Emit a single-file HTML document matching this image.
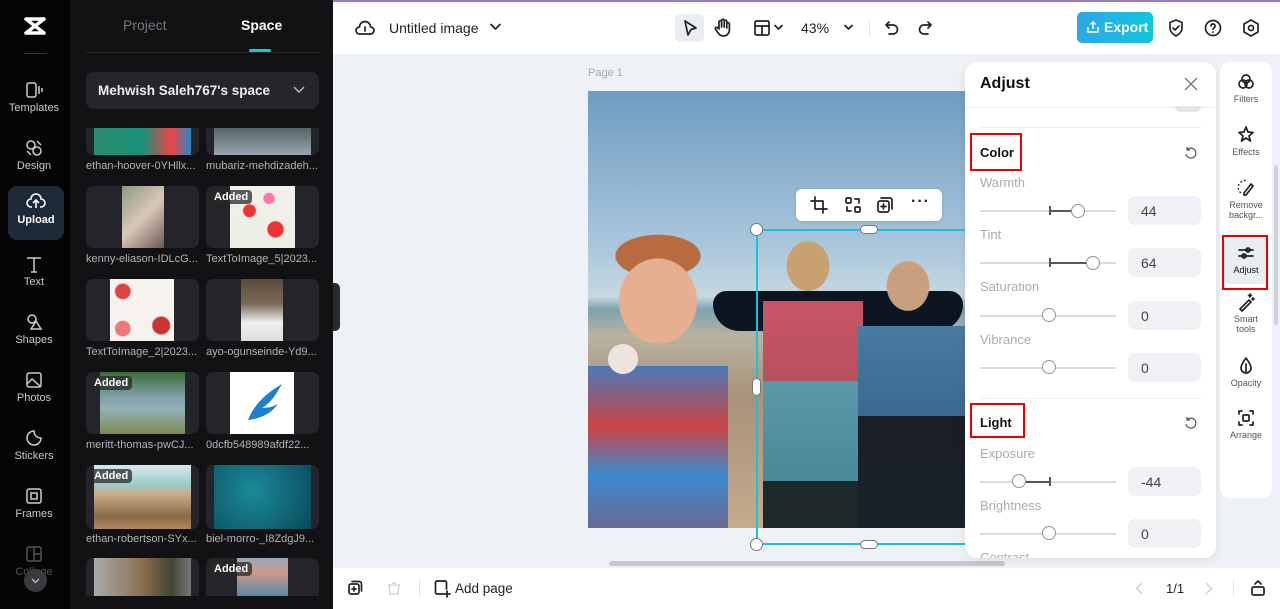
<!DOCTYPE html>
<html><head><meta charset="utf-8"><style>
*{box-sizing:border-box;margin:0;padding:0}
body{width:1280px;height:609px;overflow:hidden;font-family:"Liberation Sans",sans-serif;background:#eef1f5;position:relative}
.abs{position:absolute}
.rail{left:0;top:0;width:70px;height:609px;background:#050506}
.rail .it{position:absolute;left:6px;width:56px;height:54px;color:#c9c9cc;font-size:11px;text-align:center}
.rail .it svg{display:block;margin:6px auto 2px}
.panel{left:70px;top:0;width:263px;height:609px;background:#121215}
.thumb{position:absolute;width:113px;height:80px;background:#24252a;border-radius:7px;overflow:hidden}
.thumb .img{position:absolute;top:0;height:80px}
.cap{position:absolute;color:#b4b4b8;font-size:11px;white-space:nowrap;width:115px;overflow:hidden}
.added{position:absolute;left:4px;top:4px;background:rgba(40,40,40,.75);color:#fff;font-size:11px;font-weight:bold;padding:1px 4px;border-radius:4px}
.top{left:333px;top:0;width:947px;height:54px;background:#fff;border-top:2px solid #9a7ac2}
.bot{left:333px;top:568px;width:947px;height:41px;background:#fff}
.ic{stroke:#222;fill:none;stroke-width:1.7;stroke-linecap:round;stroke-linejoin:round}
.adj{left:965px;top:62px;width:251px;height:496px;background:#fff;border-radius:12px;box-shadow:0 2px 10px rgba(0,0,0,.08);overflow:hidden}
.lbl{position:absolute;left:15px;color:#a8acb3;font-size:13px}
.trk{position:absolute;left:15px;width:136px;height:2px;background:#d8dbe0}
.knob{position:absolute;width:14px;height:14px;border-radius:50%;background:#fff;border:1.5px solid #8e949c}
.val{position:absolute;left:163px;width:73px;height:29px;background:#eff1f4;border-radius:7px;font-size:14px;color:#444;padding:7px 0 0 13px}
.rr{left:1220px;top:62px;width:52px;height:436px;background:#fff;border-radius:10px}
.rr .it{position:absolute;left:2px;width:48px;text-align:center;font-size:9px;color:#555}
.rr svg{display:block;margin:0 auto 2px}
.red{position:absolute;border:2px solid #e00}
</style></head><body>

<div class="abs rail">
  <svg class="abs" style="left:22px;top:16px" width="26" height="20" viewBox="0 0 26 20"><path d="M4 3h18L4 17h18z" stroke="#fff" stroke-width="3.5" fill="none" stroke-linejoin="round"/></svg>
  <div class="abs" style="left:24px;top:53px;width:23px;height:1px;background:#333"></div>
  <div class="it" style="top:74px"><svg width="20" height="20" viewBox="0 0 20 20"><rect x="3" y="3" width="9" height="14" rx="2" stroke="#ccc" fill="none" stroke-width="1.5"/><path d="M15 6v8M18 8v4" stroke="#ccc" stroke-width="1.5"/></svg>Templates</div>
  <div class="it" style="top:132px"><svg width="20" height="20" viewBox="0 0 20 20"><circle cx="7" cy="7" r="4" stroke="#ccc" fill="none" stroke-width="1.5"/><circle cx="13" cy="13" r="4" stroke="#ccc" fill="none" stroke-width="1.5"/><path d="M13 3l4 4M3 13l4 4" stroke="#ccc" stroke-width="1.5"/></svg>Design</div>
  <div class="it" style="top:186px;left:8px;height:54px;background:#1e2a38;border-radius:9px;color:#fff;font-weight:bold"><svg width="20" height="20" viewBox="0 0 20 20"><path d="M6 15H5a4 4 0 0 1 0-8 5 5 0 0 1 10 0 4 4 0 0 1 0 8h-1M10 16V9M7 11l3-3 3 3" stroke="#fff" fill="none" stroke-width="1.6"/></svg>Upload</div>
  <div class="it" style="top:248px"><svg width="20" height="20" viewBox="0 0 20 20"><path d="M3 4h14M10 4v14M7 18h6" stroke="#ccc" stroke-width="1.5" fill="none"/></svg>Text</div>
  <div class="it" style="top:306px"><svg width="20" height="20" viewBox="0 0 20 20"><circle cx="8" cy="7" r="4" stroke="#ccc" fill="none" stroke-width="1.5"/><path d="M12 9l5 8H7z" stroke="#ccc" fill="none" stroke-width="1.5"/></svg>Shapes</div>
  <div class="it" style="top:364px"><svg width="20" height="20" viewBox="0 0 20 20"><rect x="3" y="3" width="14" height="14" rx="2" stroke="#ccc" fill="none" stroke-width="1.5"/><path d="M3 14l5-5 9 8" stroke="#ccc" fill="none" stroke-width="1.5"/></svg>Photos</div>
  <div class="it" style="top:422px"><svg width="20" height="20" viewBox="0 0 20 20"><path d="M17 10a7 7 0 1 1-7-7c0 4 3 7 7 7z" stroke="#ccc" fill="none" stroke-width="1.5"/></svg>Stickers</div>
  <div class="it" style="top:480px"><svg width="20" height="20" viewBox="0 0 20 20"><rect x="3" y="3" width="14" height="14" rx="2" stroke="#ccc" fill="none" stroke-width="1.5"/><rect x="7" y="7" width="6" height="6" stroke="#ccc" fill="none" stroke-width="1.5"/></svg>Frames</div>
  <div class="it" style="top:538px;color:#555"><svg width="20" height="20" viewBox="0 0 20 20"><rect x="3" y="3" width="14" height="14" rx="2" stroke="#555" fill="none" stroke-width="1.5"/><path d="M10 3v14M10 10h7" stroke="#555" stroke-width="1.5"/></svg>Collage</div>
  <div class="abs" style="left:24px;top:569px;width:23px;height:23px;border-radius:50%;background:#3a3b40"><svg width="23" height="23" viewBox="0 0 23 23"><path d="M8 10l3.5 3.5L15 10" stroke="#bbb" fill="none" stroke-width="1.3"/></svg></div>
</div>

<div class="abs panel">
  <div class="abs" style="left:53px;top:17px;color:#77777c;font-size:14px">Project</div>
  <div class="abs" style="left:171px;top:17px;color:#fff;font-size:14px;font-weight:bold">Space</div>
  <div class="abs" style="left:16px;top:52px;width:234px;height:1px;background:#26272b"></div>
  <div class="abs" style="left:179px;top:49px;width:22px;height:3px;background:#1fc3dc;border-radius:2px"></div>

  <div class="thumb" style="left:16px;top:128px;height:27px;border-radius:0 0 7px 7px"><div class="img" style="left:8px;width:97px;height:27px;background:linear-gradient(90deg,#2b8c6a,#17907a 50%,#e44 80%,#28c)"></div></div>
  <div class="thumb" style="left:136px;top:128px;height:27px;border-radius:0 0 7px 7px"><div class="img" style="left:8px;width:97px;height:27px;background:linear-gradient(#566,#99a4b0)"></div></div>
  <div class="abs" style="left:16px;top:72px;width:233px;height:37px;background:#25262b;border-radius:8px;color:#eee;font-size:13.5px;font-weight:bold;padding:11px 12px">Mehwish Saleh767's space<svg class="abs" style="right:14px;top:14px" width="12" height="8" viewBox="0 0 12 8"><path d="M1 1l5 5 5-5" stroke="#bbb" fill="none" stroke-width="1.4"/></svg></div>
  <div class="cap" style="left:16px;top:160px">ethan-hoover-0YHllx...</div>
  <div class="cap" style="left:136px;top:160px">mubariz-mehdizadeh...</div>

  <div class="thumb" style="left:16px;top:186px;height:62px"><div class="img" style="left:36px;width:42px;height:62px;background:linear-gradient(135deg,#8a9a80,#d9c8b8 50%,#6a5a55)"></div></div>
  <div class="thumb" style="left:136px;top:186px;height:62px"><div class="img" style="left:24px;width:65px;height:62px;background:radial-gradient(circle at 30% 40%,#e33 10%,transparent 12%),radial-gradient(circle at 70% 70%,#e33 12%,transparent 14%),radial-gradient(circle at 60% 20%,#f7a 8%,transparent 10%),linear-gradient(#f4efe8,#e9f0e6)"></div><span class="added">Added</span></div>
  <div class="cap" style="left:16px;top:253px">kenny-eliason-IDLcG...</div>
  <div class="cap" style="left:136px;top:253px">TextToImage_5|2023...</div>

  <div class="thumb" style="left:16px;top:279px;height:62px"><div class="img" style="left:24px;width:64px;height:62px;background:radial-gradient(circle at 20% 20%,#d44 10%,transparent 12%),radial-gradient(circle at 80% 75%,#c33 12%,transparent 14%),radial-gradient(circle at 20% 80%,#e77 10%,transparent 12%),#f6f3ef"></div></div>
  <div class="thumb" style="left:136px;top:279px;height:62px"><div class="img" style="left:35px;width:42px;height:62px;background:linear-gradient(#5a4a3a,#7a6a58 40%,#eee 70%,#ddd)"></div></div>
  <div class="cap" style="left:16px;top:346px">TextToImage_2|2023...</div>
  <div class="cap" style="left:136px;top:346px">ayo-ogunseinde-Yd9...</div>

  <div class="thumb" style="left:16px;top:372px;height:62px"><div class="img" style="left:14px;width:85px;height:62px;background:linear-gradient(#3c6a3a,#80a0a8 40%,#95b0b8 60%,#7a8a50)"></div><span class="added">Added</span></div>
  <div class="thumb" style="left:136px;top:372px;height:62px"><div class="img" style="left:24px;width:64px;height:62px;background:#fff"><svg width="64" height="62"><path d="M18 48c6-16 20-28 34-36-6 10-10 18-20 24 8 0 12-2 16-4-6 8-14 14-30 16z" fill="#1d7fd0"/></svg></div></div>
  <div class="cap" style="left:16px;top:439px">meritt-thomas-pwCJ...</div>
  <div class="cap" style="left:136px;top:439px">0dcfb548989afdf22...</div>

  <div class="thumb" style="left:16px;top:465px;height:64px"><div class="img" style="left:8px;width:97px;height:64px;background:linear-gradient(#dbe8f0,#9cc 30%,#c9ae88 45%,#8a6a48 80%,#b08860)"></div><span class="added">Added</span></div>
  <div class="thumb" style="left:136px;top:465px;height:64px"><div class="img" style="left:8px;width:97px;height:64px;background:radial-gradient(circle at 40% 40%,#1a8a9a,#0a4a5a)"></div></div>
  <div class="cap" style="left:16px;top:533px">ethan-robertson-SYx...</div>
  <div class="cap" style="left:136px;top:533px">biel-morro-_I8ZdgJ9...</div>

  <div class="thumb" style="left:16px;top:558px;height:38px;border-radius:7px 7px 0 0"><div class="img" style="left:8px;width:97px;height:38px;background:linear-gradient(90deg,#aaa,#8a7050 50%,#443 80%,#777)"></div></div>
  <div class="thumb" style="left:136px;top:558px;height:38px;border-radius:7px 7px 0 0"><div class="img" style="left:31px;width:51px;height:38px;background:linear-gradient(#9ab,#c98 40%,#58a)"></div><span class="added">Added</span></div>
</div>
<div class="abs" style="left:333px;top:283px;width:7px;height:48px;background:#2a2a2e;border-radius:0 5px 5px 0"></div>

<div class="abs top">
  <svg class="abs" style="left:22px;top:17px" width="20" height="18" viewBox="0 0 20 18"><path d="M5 15H4.5a3.5 3.5 0 0 1 0-7 5.5 5.5 0 0 1 11 0 3.5 3.5 0 0 1 0 7H5z" class="ic"/><path d="M10 12V8" class="ic"/></svg>
  <div class="abs" style="left:56px;top:18px;font-size:14px;color:#222">Untitled image</div>
  <svg class="abs" style="left:157px;top:21px" width="11" height="8" viewBox="0 0 11 8"><path d="M1 1.5l4.5 4.5 4.5-4.5" class="ic"/></svg>
  <div class="abs" style="left:342px;top:12px;width:29px;height:28px;background:#e9ecf0;border-radius:6px"></div>
  <svg class="abs" style="left:348px;top:17px" width="18" height="18" viewBox="0 0 18 18"><path d="M4 2l11 7-5 1.5L7 16z" class="ic"/></svg>
  <svg class="abs" style="left:380px;top:16px" width="19" height="20" viewBox="0 0 19 20"><path d="M6 11V4a1.3 1.3 0 0 1 2.6 0v5V2.5a1.3 1.3 0 0 1 2.6 0V9V3.5a1.3 1.3 0 0 1 2.6 0V10V6a1.3 1.3 0 0 1 2.6 0v6a6 6 0 0 1-6 6c-3 0-4-1.5-6-4l-2-3a1.3 1.3 0 0 1 2-1.5z" class="ic" stroke-width="1.4"/></svg>
  <svg class="abs" style="left:420px;top:17px" width="18" height="18" viewBox="0 0 18 18"><rect x="2" y="2" width="14" height="14" rx="1.5" class="ic"/><path d="M2 7h14M9 7v9" class="ic"/></svg>
  <svg class="abs" style="left:441px;top:22px" width="9" height="7" viewBox="0 0 9 7"><path d="M1 1.5l3.5 3.5L8 1.5" class="ic" stroke-width="1.4"/></svg>
  <div class="abs" style="left:468px;top:18px;font-size:14px;color:#222">43%</div>
  <svg class="abs" style="left:511px;top:22px" width="9" height="7" viewBox="0 0 9 7"><path d="M1 1.5l3.5 3.5L8 1.5" class="ic" stroke-width="1.4"/></svg>
  <div class="abs" style="left:536px;top:18px;width:1px;height:18px;background:#e3e5e8"></div>
  <svg class="abs" style="left:550px;top:17px" width="18" height="18" viewBox="0 0 18 18"><path d="M6 3L3 6l3 3M3 6h7a4.5 4.5 0 0 1 0 9H6" class="ic"/></svg>
  <svg class="abs" style="left:583px;top:17px" width="18" height="18" viewBox="0 0 18 18"><path d="M12 3l3 3-3 3M15 6H8a4.5 4.5 0 0 0 0 9h4" class="ic" stroke="#ccc"/></svg>
  <div class="abs" style="left:744px;top:10px;width:76px;height:31px;border-radius:5px;background:linear-gradient(90deg,#2ea6ea,#10c6dc);color:#fff;font-size:14px;font-weight:bold;padding:7px 0 0 27px">Export</div>
  <svg class="abs" style="left:753px;top:18px" width="14" height="14" viewBox="0 0 14 14"><path d="M2 7v5h10V7M7 9V2M4.5 4.5L7 2l2.5 2.5" stroke="#fff" fill="none" stroke-width="1.5"/></svg>
  <svg class="abs" style="left:834px;top:16px" width="18" height="20" viewBox="0 0 18 20"><path d="M9 2l6 2.5v5c0 4-3 7-6 8.5-3-1.5-6-4.5-6-8.5v-5z" class="ic"/><path d="M6 10l2 2 4-4" class="ic"/></svg>
  <svg class="abs" style="left:870px;top:16px" width="20" height="20" viewBox="0 0 20 20"><circle cx="10" cy="10" r="7.5" class="ic"/><path d="M8 8a2 2 0 1 1 3 1.7c-.7.4-1 .8-1 1.6M10 14v.3" class="ic"/></svg>
  <svg class="abs" style="left:908px;top:16px" width="20" height="20" viewBox="0 0 20 20"><path d="M10 2l7 4v8l-7 4-7-4V6z" class="ic"/><circle cx="10" cy="10" r="2.5" class="ic"/></svg>
</div>

<div class="abs" style="left:588px;top:67px;font-size:11px;color:#a5aab2">Page 1</div>
<div class="abs" style="left:588px;top:91px;width:380px;height:437px;overflow:hidden;background:linear-gradient(#6e9cc2 0%,#a9c6dc 35%,#c6d8e0 47%,#7da3b0 50%,#b9b2a0 56%,#a8927a 70%,#c4ab8c 100%)">
  <div class="abs" style="left:125px;top:200px;width:250px;height:40px;background:#0d1520;border-radius:20px 20px 40px 40px"></div>
  <div class="abs" style="left:0;top:135px;width:140px;height:302px;background:radial-gradient(ellipse 55px 60px at 70px 75px,#e6b090 70%,transparent 72%),radial-gradient(ellipse 60px 30px at 70px 30px,#b86a40 70%,transparent 72%),linear-gradient(transparent 140px,#4a7ab8 140px,#c44 200px,#3a8ad0 250px,#6a6a90)"></div>
  <div class="abs" style="left:175px;top:140px;width:100px;height:297px;background:radial-gradient(ellipse 30px 35px at 45px 35px,#c9a070 70%,transparent 72%),linear-gradient(transparent 70px,#c85566 70px,#b85060 150px,#5a9aa8 150px,#4a8a98 250px,#1e2a2a 250px)"></div>
  <div class="abs" style="left:270px;top:155px;width:110px;height:282px;background:radial-gradient(ellipse 30px 35px at 50px 40px,#c8a080 70%,transparent 72%),linear-gradient(transparent 80px,#4a7aa0 80px,#3a6a90 170px,#1a1e26 170px,#1a2228 282px)"></div>
  <div class="abs" style="left:20px;top:253px;width:30px;height:30px;border-radius:50%;background:#eee3dd"></div>
</div>
<div class="abs" style="left:796px;top:189px;width:146px;height:32px;background:#fff;border-radius:6px;box-shadow:0 1px 4px rgba(0,0,0,.12)">
  <svg class="abs" style="left:14px;top:7px" width="18" height="18" viewBox="0 0 18 18"><path d="M5 1v12h12M1 5h12v12" class="ic"/></svg>
  <svg class="abs" style="left:48px;top:7px" width="18" height="18" viewBox="0 0 18 18"><rect x="2" y="2" width="5" height="5" rx="1" class="ic"/><rect x="11" y="11" width="5" height="5" rx="1" class="ic"/><path d="M11 3h4v4M7 15H3v-4" class="ic"/></svg>
  <svg class="abs" style="left:80px;top:7px" width="18" height="18" viewBox="0 0 18 18"><rect x="2" y="5" width="11" height="11" rx="2" class="ic"/><path d="M5 2h9a2 2 0 0 1 2 2v9M7.5 8v5M5 10.5h5" class="ic"/></svg>
  <div class="abs" style="left:115px;top:4px;font-size:16px;font-weight:bold;color:#222;letter-spacing:1px">···</div>
</div>
<div class="abs" style="left:756px;top:229px;width:212px;height:316px;border:2px solid #1cc0d8;border-right:none"></div>
<div class="abs" style="left:750px;top:223px;width:13px;height:13px;border-radius:50%;background:#fff;border:1.5px solid #777"></div>
<div class="abs" style="left:750px;top:538px;width:13px;height:13px;border-radius:50%;background:#fff;border:1.5px solid #777"></div>
<div class="abs" style="left:860px;top:225px;width:18px;height:9px;border-radius:5px;background:#fff;border:1.5px solid #777"></div>
<div class="abs" style="left:860px;top:540px;width:18px;height:9px;border-radius:5px;background:#fff;border:1.5px solid #777"></div>
<div class="abs" style="left:752px;top:378px;width:9px;height:18px;border-radius:5px;background:#fff;border:1.5px solid #777"></div>
<div class="abs" style="left:609px;top:561px;width:396px;height:5px;border-radius:3px;background:#c5c8cd"></div>

<div class="abs adj">
  <div class="abs" style="left:15px;top:13px;font-size:16px;font-weight:bold;color:#111">Adjust</div>
  <svg class="abs" style="left:219px;top:15px" width="14" height="14" viewBox="0 0 14 14"><path d="M1 1l12 12M13 1L1 13" stroke="#777" stroke-width="1.3"/></svg>
  <div class="abs" style="left:0;top:45px;width:251px;height:1px;background:#eee"></div>
  <div class="abs" style="left:210px;top:44px;width:26px;height:6px;border-radius:0 0 5px 5px;background:#e4e6ea"></div>
  <div class="abs" style="left:15px;top:65px;width:221px;height:1px;background:#eceef1"></div>
  <div class="abs" style="left:15px;top:83px;font-size:13px;font-weight:bold;color:#111">Color</div>
  <svg class="abs" style="left:219px;top:84px" width="14" height="14" viewBox="0 0 14 14"><path d="M3 4a5 5 0 1 1-1 4M3 1v3h3" stroke="#555" fill="none" stroke-width="1.2"/></svg>
  <div class="lbl" style="top:113px">Warmth</div>
  <div class="trk" style="top:148px"></div><div class="abs" style="left:84px;top:148px;width:29px;height:2px;background:#556"></div><div class="abs" style="left:84px;top:144px;width:1.5px;height:9px;background:#556"></div><div class="knob" style="left:106px;top:142px"></div>
  <div class="val" style="top:134px">44</div>
  <div class="lbl" style="top:165px">Tint</div>
  <div class="trk" style="top:200px"></div><div class="abs" style="left:84px;top:200px;width:44px;height:2px;background:#556"></div><div class="abs" style="left:84px;top:196px;width:1.5px;height:9px;background:#556"></div><div class="knob" style="left:121px;top:194px"></div>
  <div class="val" style="top:186px">64</div>
  <div class="lbl" style="top:217px">Saturation</div>
  <div class="trk" style="top:253px"></div><div class="knob" style="left:77px;top:246px"></div>
  <div class="val" style="top:239px">0</div>
  <div class="lbl" style="top:270px">Vibrance</div>
  <div class="trk" style="top:305px"></div><div class="knob" style="left:77px;top:298px"></div>
  <div class="val" style="top:291px">0</div>
  <div class="abs" style="left:15px;top:336px;width:221px;height:1px;background:#eceef1"></div>
  <div class="abs" style="left:15px;top:353px;font-size:13px;font-weight:bold;color:#111">Light</div>
  <svg class="abs" style="left:219px;top:354px" width="14" height="14" viewBox="0 0 14 14"><path d="M3 4a5 5 0 1 1-1 4M3 1v3h3" stroke="#555" fill="none" stroke-width="1.2"/></svg>
  <div class="lbl" style="top:384px">Exposure</div>
  <div class="trk" style="top:419px"></div><div class="abs" style="left:53px;top:419px;width:31px;height:2px;background:#556"></div><div class="abs" style="left:84px;top:415px;width:1.5px;height:9px;background:#556"></div><div class="knob" style="left:47px;top:412px"></div>
  <div class="val" style="top:405px">-44</div>
  <div class="lbl" style="top:436px">Brightness</div>
  <div class="trk" style="top:471px"></div><div class="knob" style="left:77px;top:464px"></div>
  <div class="val" style="top:457px">0</div>
  <div class="lbl" style="top:488px">Contrast</div>
</div>
<div class="red" style="left:970px;top:133px;width:52px;height:38px"></div>
<div class="red" style="left:970px;top:403px;width:55px;height:35px"></div>

<div class="abs rr">
  <div class="it" style="top:10px"><svg width="20" height="20" viewBox="0 0 20 20"><circle cx="10" cy="7" r="4" class="ic" stroke-width="1.4"/><circle cx="7" cy="12" r="4" class="ic" stroke-width="1.4"/><circle cx="13" cy="12" r="4" class="ic" stroke-width="1.4"/></svg>Filters</div>
  <div class="it" style="top:63px"><svg width="20" height="20" viewBox="0 0 20 20"><path d="M10 2l2 5 5 .5-4 3.5 1.5 5L10 13l-4.5 3 1.5-5-4-3.5 5-.5z" class="ic" stroke-width="1.4"/></svg>Effects</div>
  <div class="it" style="top:116px;line-height:10px"><svg width="20" height="20" viewBox="0 0 20 20"><path d="M5 15a7 7 0 0 1 7-12" stroke="#333" stroke-dasharray="2 2" fill="none" stroke-width="1.4"/><path d="M8 15l7-9 2 2-7 9H8z" class="ic" stroke-width="1.4"/></svg>Remove<br>backgr...</div>
  <div class="it" style="top:176px;left:4px;width:44px;height:46px;background:#e9ecf0;border-radius:6px;color:#111;padding-top:5px"><svg width="20" height="20" viewBox="0 0 20 20"><path d="M3 7h14M3 13h14" class="ic" stroke-width="1.5"/><circle cx="12" cy="7" r="2" fill="#e9ecf0" class="ic" stroke-width="1.5"/><circle cx="8" cy="13" r="2" fill="#e9ecf0" class="ic" stroke-width="1.5"/></svg>Adjust</div>
  <div class="it" style="top:230px;line-height:10px"><svg width="20" height="20" viewBox="0 0 20 20"><path d="M4 17L13 8l2 2-9 9zM14 2v3M12.5 3.5h3M17 6v2M16 7h2" class="ic" stroke-width="1.4"/></svg>Smart<br>tools</div>
  <div class="it" style="top:294px"><svg width="20" height="20" viewBox="0 0 20 20"><path d="M10 2c3 4 5 7 5 10a5 5 0 0 1-10 0c0-3 2-6 5-10z" class="ic" stroke-width="1.4"/><path d="M10 8v9" class="ic" stroke-width="1.4"/></svg>Opacity</div>
  <div class="it" style="top:346px"><svg width="20" height="20" viewBox="0 0 20 20"><path d="M3 6V3h3M14 3h3v3M17 14v3h-3M6 17H3v-3" class="ic" stroke-width="1.4"/><rect x="7" y="7" width="6" height="6" rx="1" class="ic" stroke-width="1.4"/></svg>Arrange</div>
</div>
<div class="red" style="left:1222px;top:235px;width:46px;height:55px"></div>
<div class="abs" style="left:1274px;top:165px;width:4px;height:160px;background:#cfd2d6;border-radius:2px"></div>

<div class="abs bot">
  <svg class="abs" style="left:14px;top:12px" width="16" height="16" viewBox="0 0 16 16"><rect x="2" y="4" width="10" height="10" rx="2" class="ic" stroke-width="1.5"/><path d="M5 1.5h7a2.5 2.5 0 0 1 2.5 2.5v7M7 7v4M5 9h4" class="ic" stroke-width="1.5"/></svg>
  <svg class="abs" style="left:53px;top:12px" width="16" height="16" viewBox="0 0 16 16"><path d="M3 5h10l-1 9H4zM6 3h4M2 5h12" stroke="#ccd" fill="none" stroke-width="1.3"/></svg>
  <div class="abs" style="left:86px;top:11px;width:1px;height:18px;background:#e3e5e8"></div>
  <svg class="abs" style="left:100px;top:11px" width="18" height="19" viewBox="0 0 18 19"><path d="M10 15H4a1.5 1.5 0 0 1-1.5-1.5v-10A1.5 1.5 0 0 1 4 2h8a1.5 1.5 0 0 1 1.5 1.5V10M14 12v6M11 15h6" class="ic" stroke-width="1.5"/></svg>
  <div class="abs" style="left:122px;top:13px;font-size:13.5px;color:#222">Add page</div>
  <svg class="abs" style="left:802px;top:14px" width="8" height="13" viewBox="0 0 8 13"><path d="M7 1L1.5 6.5 7 12" stroke="#ccc" fill="none" stroke-width="1.3"/></svg>
  <div class="abs" style="left:833px;top:13px;font-size:13px;color:#222">1/1</div>
  <svg class="abs" style="left:872px;top:14px" width="8" height="13" viewBox="0 0 8 13"><path d="M1 1l5.5 5.5L1 12" stroke="#ccc" fill="none" stroke-width="1.3"/></svg>
  <div class="abs" style="left:900px;top:11px;width:1px;height:18px;background:#e3e5e8"></div>
  <svg class="abs" style="left:917px;top:11px" width="16" height="18" viewBox="0 0 16 18"><rect x="2" y="8" width="12" height="8" rx="1.5" class="ic" stroke-width="1.5"/><path d="M5 5l3-3 3 3" class="ic" stroke-width="1.5"/></svg>
</div>
</body></html>
